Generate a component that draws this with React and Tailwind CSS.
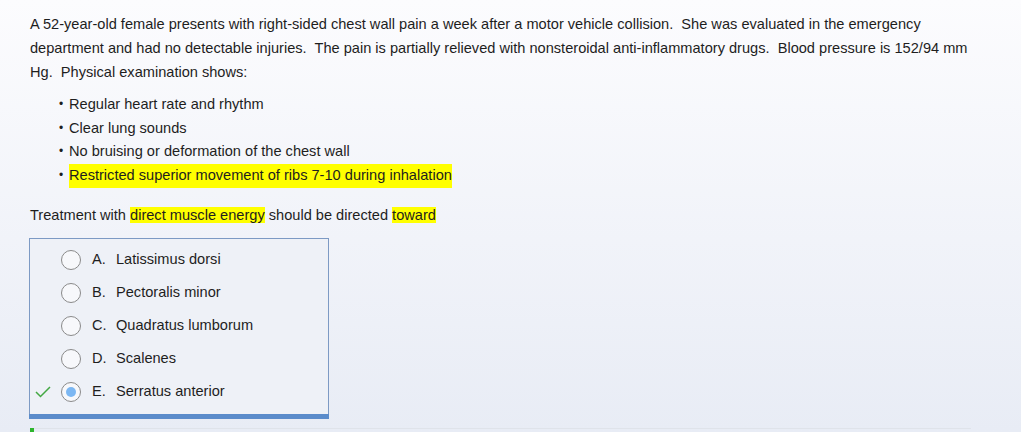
import React from "react";

const options = [
  { letter: "A.", text: "Latissimus dorsi" },
  { letter: "B.", text: "Pectoralis minor" },
  { letter: "C.", text: "Quadratus lumborum" },
  { letter: "D.", text: "Scalenes" },
  { letter: "E.", text: "Serratus anterior", selected: true },
];

const findings = [
  { text: "Regular heart rate and rhythm" },
  { text: "Clear lung sounds" },
  { text: "No bruising or deformation of the chest wall" },
  { text: "Restricted superior movement of ribs 7-10 during inhalation", mark: true },
];

const App = () => {
  return (
    <div
      className="w-[1021px] h-[432px] overflow-hidden bg-gradient-to-b from-[#fcfcfe] to-[#e8ecf5] text-[#1e1e1e] text-[14.6px]"
      style={{ fontFamily: '"Liberation Sans", Arial, sans-serif' }}
    >
      <div className="pl-[30px] pr-[50px] pt-[12px]">
        <p className="leading-[24px]">
          A 52-year-old female presents with right-sided chest wall pain a week after a motor vehicle collision.&nbsp; She was evaluated in the emergency department and had no detectable injuries.&nbsp; The pain is partially relieved with nonsteroidal anti-inflammatory drugs.&nbsp; Blood pressure is 152/94 mm Hg.&nbsp; Physical examination shows:
        </p>

        <ul className="mt-[9px] pl-[39px]">
          {findings.map((f, idx) => (
            <li key={idx} className="leading-[23.67px] flex items-center">
              <span className="w-[10px] -ml-[10px] text-[12px]">•</span>
              <span className={f.mark ? "bg-[#ffff00]" : ""}>{f.text}</span>
            </li>
          ))}
        </ul>

        <p className="mt-[15px] leading-[24px]">
          Treatment with <span className="bg-[#ffff00]">direct muscle energy</span> should be directed{" "}
          <span className="bg-[#ffff00]">toward</span>
        </p>

        <div className="mt-[11px] -ml-[1px] w-[300px] border border-[#7d9ac4] border-b-0 bg-[#eef1f7]">
          <div className="pt-[5px] pb-[5px]">
            {options.map((o, idx) => (
              <div key={idx} className="h-[33px] flex items-center">
                <div className="w-[31px] flex justify-end pr-[10px]">
                  {o.selected && (
                    <svg width="16" height="12" viewBox="0 0 16 12">
                      <path d="M1 6 L5.5 10.5 L15 1" fill="none" stroke="#43a843" strokeWidth="1.5" />
                    </svg>
                  )}
                </div>
                <div className="w-[20px] h-[20px] rounded-full border border-[#8a8a8a] bg-[#f7f8fb] flex items-center justify-center">
                  {o.selected && <div className="w-[10px] h-[10px] rounded-full bg-[#7cb7f2]" />}
                </div>
                <span className="ml-[11px] w-[24px]">{o.letter}</span>
                <span>{o.text}</span>
              </div>
            ))}
          </div>
          <div className="h-[5px] bg-[#5b8ccb] -mx-[1px]" />
        </div>

        <div className="mt-[9px] flex items-start">
          <div className="w-[4px] h-[5px] bg-[#2db52d]" />
          <div className="flex-1 h-[5px] border-t border-[#dfe3ea]" />
        </div>
      </div>
    </div>
  );
};

export default App;
